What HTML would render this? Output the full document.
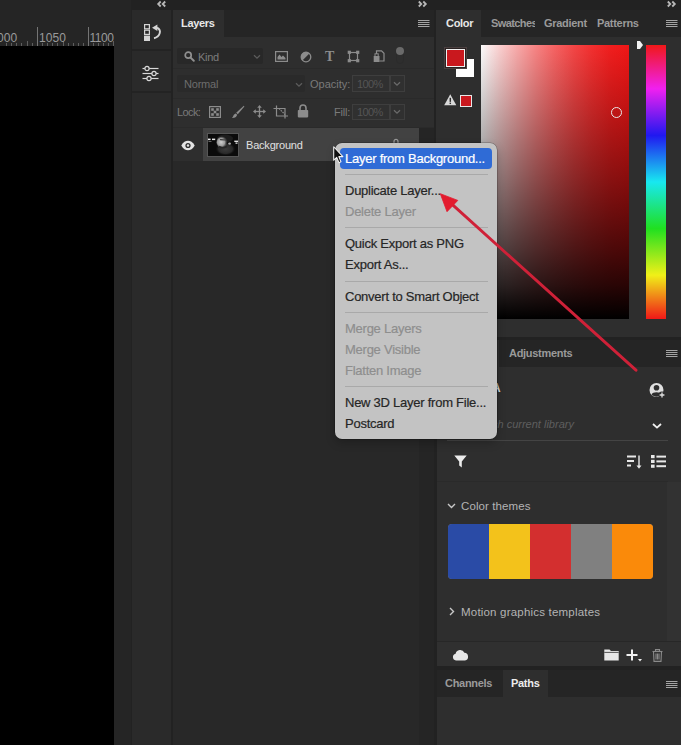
<!DOCTYPE html>
<html>
<head>
<meta charset="utf-8">
<title>Layers</title>
<style>
html,body{margin:0;padding:0;}
body{width:681px;height:745px;overflow:hidden;background:#222222;position:relative;font-family:"Liberation Sans",sans-serif;font-size:11px;color:#d6d6d6;}
.abs{position:absolute;}
.t{position:absolute;white-space:nowrap;line-height:14px;}
.dim{color:#6f6f6f;}
svg{position:absolute;overflow:visible;}
.mi{left:10px;line-height:16px;letter-spacing:-0.25px;-webkit-text-stroke:0.2px;}
.dis{color:#8e8e8e;}
.sep{left:10px;width:143px;height:1px;background:#a9a9a9;}
</style>
</head>
<body>
<!-- canvas area -->
<div class="abs" style="left:0;top:0;width:131px;height:745px;background:#252525;"></div>
<div class="abs" style="left:0;top:46px;width:114px;height:699px;background:#000;"></div>
<!-- ruler -->
<svg style="left:0.7px;top:24px" width="113.3" height="22">
 <g stroke="#747474" stroke-width="1">
  <line x1="36.5" y1="3" x2="36.5" y2="22"/><line x1="87.5" y1="3" x2="87.5" y2="22"/>
  <g id="tk"></g>
 </g>
 <g stroke="#5e5e5e" stroke-width="1">
  <line x1="5.5" y1="19" x2="5.5" y2="22"/><line x1="10.5" y1="19" x2="10.5" y2="22"/><line x1="15.5" y1="19" x2="15.5" y2="22"/><line x1="20.5" y1="19" x2="20.5" y2="22"/><line x1="26.5" y1="17" x2="26.5" y2="22"/><line x1="31.5" y1="19" x2="31.5" y2="22"/>
  <line x1="41.5" y1="19" x2="41.5" y2="22"/><line x1="46.5" y1="19" x2="46.5" y2="22"/><line x1="51.5" y1="19" x2="51.5" y2="22"/><line x1="56.5" y1="19" x2="56.5" y2="22"/><line x1="62.5" y1="17" x2="62.5" y2="22"/><line x1="67.5" y1="19" x2="67.5" y2="22"/><line x1="72.5" y1="19" x2="72.5" y2="22"/><line x1="77.5" y1="19" x2="77.5" y2="22"/><line x1="82.5" y1="19" x2="82.5" y2="22"/>
  <line x1="92.5" y1="19" x2="92.5" y2="22"/><line x1="97.5" y1="19" x2="97.5" y2="22"/><line x1="102.5" y1="19" x2="102.5" y2="22"/><line x1="107.5" y1="19" x2="107.5" y2="22"/><line x1="112.5" y1="17" x2="112.5" y2="22"/>
 </g>
</svg>
<div class="t" style="left:-3px;top:30.7px;font-size:12px;color:#9a9a9a;letter-spacing:0.1px;">000</div>
<div class="t" style="left:39px;top:30.7px;font-size:12px;color:#9a9a9a;letter-spacing:0.1px;">1050</div>
<div class="t" style="left:89.5px;top:30.7px;font-size:12px;color:#9a9a9a;letter-spacing:-0.5px;">1100</div>

<!-- tool column -->
<div class="abs" style="left:132px;top:10px;width:38.5px;height:735px;background:#2a2a2a;"></div>
<div class="abs" style="left:132px;top:49px;width:38.5px;height:2px;background:#232323;"></div>
<div class="abs" style="left:132px;top:91px;width:38.5px;height:2px;background:#232323;"></div>
<svg style="left:156.5px;top:1px" width="9" height="6" viewBox="0 0 9 6"><path d="M3.7 0.5 L1.2 3 L3.7 5.5 M8.2 0.5 L5.7 3 L8.2 5.5" fill="none" stroke="#b8b8b8" stroke-width="1.8"/></svg>

<!-- layers panel -->
<div class="abs" style="left:173px;top:10px;width:260.5px;height:735px;background:#2e2e2e;"></div>
<div class="abs" style="left:224px;top:10px;width:209.5px;height:27px;background:#252525;"></div>
<div class="t" style="left:181px;top:16px;font-weight:bold;color:#e8e8e8;letter-spacing:-0.3px;">Layers</div>


<!-- layers controls -->
<div class="abs" style="left:173px;top:68px;width:260.5px;height:1px;background:#2a2a2a;"></div>
<div class="abs" style="left:173px;top:98px;width:260.5px;height:1px;background:#2a2a2a;"></div>
<div class="abs" style="left:177px;top:48px;width:86px;height:16px;background:#282828;border-radius:2px;"></div>
<svg style="left:184px;top:51px" width="11" height="11" viewBox="0 0 11 11"><circle cx="4.2" cy="4.2" r="3" fill="none" stroke="#8f8f8f" stroke-width="1.7"/><line x1="6.6" y1="6.6" x2="9.8" y2="9.8" stroke="#8f8f8f" stroke-width="2" stroke-linecap="round"/></svg>
<div class="t" style="left:198px;top:50px;color:#7d7d7d;letter-spacing:-0.3px;">Kind</div>
<svg style="left:253px;top:54px" width="8" height="6" viewBox="0 0 8 6"><path d="M1 1.2 L4 4.2 L7 1.2" fill="none" stroke="#5c5c5c" stroke-width="1.3"/></svg>
<!-- filter icons -->
<svg style="left:275px;top:51px" width="13" height="11" viewBox="0 0 13 11"><rect x="0.6" y="0.6" width="11.8" height="9.8" fill="none" stroke="#8c8c8c" stroke-width="1.2"/><path d="M2.5 8.5 L2.5 6 L4.5 3.5 L6.5 6 L8 4.5 L10.5 7 L10.5 8.5 Z" fill="#8c8c8c"/></svg>
<svg style="left:300px;top:51px" width="12" height="12" viewBox="0 0 12 12"><circle cx="6" cy="6" r="4.8" fill="none" stroke="#8c8c8c" stroke-width="1.3"/><path d="M2.4 9.4 A4.8 4.8 0 0 1 9.4 2.4 Z" fill="#8c8c8c"/></svg>
<div class="t" style="left:325px;top:48px;font-family:'Liberation Serif',serif;font-weight:bold;font-size:14px;line-height:17px;color:#8c8c8c;">T</div>
<svg style="left:347px;top:50px" width="13" height="13" viewBox="0 0 13 13"><rect x="2.5" y="2.5" width="8" height="8" fill="none" stroke="#8c8c8c" stroke-width="1.2"/><rect x="0.7" y="0.7" width="3.2" height="3.2" fill="#8c8c8c"/><rect x="9.1" y="0.7" width="3.2" height="3.2" fill="#8c8c8c"/><rect x="0.7" y="9.1" width="3.2" height="3.2" fill="#8c8c8c"/><rect x="9.1" y="9.1" width="3.2" height="3.2" fill="#8c8c8c"/></svg>
<svg style="left:373px;top:50px" width="12" height="13" viewBox="0 0 12 13"><path d="M3.5 4 L3.5 0.8 L8.5 0.8 L11 3.3 L11 11 L6.5 11" fill="none" stroke="#8c8c8c" stroke-width="1.2"/><rect x="0.7" y="6" width="5.8" height="6" fill="#8c8c8c"/><rect x="2" y="3.8" width="3.2" height="3" fill="none" stroke="#8c8c8c" stroke-width="1"/></svg>
<div class="abs" style="left:396px;top:47px;width:8px;height:17px;border:1px solid #2b2b2b;border-radius:5px;box-sizing:border-box;"></div>
<div class="abs" style="left:396px;top:47px;width:8px;height:8px;border-radius:50%;background:#6a6a6a;"></div>

<!-- blend row -->
<div class="abs" style="left:177px;top:75px;width:128px;height:17px;background:#2a2a2a;border-radius:2px;"></div>
<div class="t" style="left:184px;top:77px;color:#6d6d6d;letter-spacing:-0.2px;">Normal</div>
<svg style="left:295px;top:82px" width="8" height="6" viewBox="0 0 8 6"><path d="M1 1.2 L4 4.2 L7 1.2" fill="none" stroke="#5c5c5c" stroke-width="1.3"/></svg>
<div class="t" style="left:310px;top:77px;color:#7a7a7a;">Opacity:</div>
<div class="abs" style="left:352px;top:75px;width:38px;height:17px;border:1px solid #3e3e3e;box-sizing:border-box;background:#303030;"></div>
<div class="t" style="left:357px;top:77px;color:#555;letter-spacing:-0.6px;">100%</div>
<div class="abs" style="left:390px;top:75px;width:15px;height:17px;border:1px solid #3e3e3e;box-sizing:border-box;background:#303030;"></div>
<svg style="left:393px;top:81px" width="8" height="6" viewBox="0 0 8 6"><path d="M1 1.2 L4 4.2 L7 1.2" fill="none" stroke="#6a6a6a" stroke-width="1.3"/></svg>

<!-- lock row -->
<div class="t" style="left:177px;top:105px;color:#7a7a7a;letter-spacing:-0.6px;">Lock:</div>
<svg style="left:209px;top:106px" width="12" height="12" viewBox="0 0 12 12"><rect x="0.6" y="0.6" width="10.8" height="10.8" fill="none" stroke="#8c8c8c" stroke-width="1.2"/><rect x="2.2" y="2.2" width="2.6" height="2.6" fill="#8c8c8c"/><rect x="7.2" y="2.2" width="2.6" height="2.6" fill="#8c8c8c"/><rect x="4.7" y="4.7" width="2.6" height="2.6" fill="#8c8c8c"/><rect x="2.2" y="7.2" width="2.6" height="2.6" fill="#8c8c8c"/><rect x="7.2" y="7.2" width="2.6" height="2.6" fill="#8c8c8c"/></svg>
<svg style="left:231px;top:105px" width="14" height="14" viewBox="0 0 14 14"><path d="M12.8 0.8 L13.4 1.6 L6.8 9.2 L5.2 7.8 Z" fill="#8c8c8c"/><path d="M4.6 8.4 L6.2 9.8 C5.8 12 3.5 13.2 0.8 13 C2.4 12 2.2 9.2 4.6 8.4 Z" fill="#8c8c8c"/></svg>
<svg style="left:253px;top:105px" width="13" height="13" viewBox="0 0 13 13"><g stroke="#8c8c8c" stroke-width="1.3" fill="none"><line x1="6.5" y1="1.5" x2="6.5" y2="11.5"/><line x1="1.5" y1="6.5" x2="11.5" y2="6.5"/></g><g fill="#8c8c8c"><path d="M6.5 0 L8.8 2.8 L4.2 2.8 Z"/><path d="M6.5 13 L8.8 10.2 L4.2 10.2 Z"/><path d="M0 6.5 L2.8 4.2 L2.8 8.8 Z"/><path d="M13 6.5 L10.2 4.2 L10.2 8.8 Z"/></g></svg>
<svg style="left:273px;top:105px" width="16" height="14" viewBox="0 0 16 14"><g stroke="#8c8c8c" stroke-width="1.2" fill="none"><path d="M3.5 0.5 L3.5 11 L15 11"/><path d="M0.5 3.5 L12 3.5 L12 13.5"/><line x1="6" y1="3.5" x2="12" y2="9.5" stroke-dasharray="1.5 1"/></g></svg>
<svg style="left:297px;top:104px" width="12" height="14" viewBox="0 0 12 14"><path d="M3 6 L3 4 A3 3 0 0 1 9 4 L9 6" fill="none" stroke="#8c8c8c" stroke-width="1.6"/><rect x="0.8" y="6" width="10.4" height="7.4" rx="0.8" fill="#8c8c8c"/></svg>
<div class="t" style="left:334px;top:105px;color:#7a7a7a;letter-spacing:-0.2px;">Fill:</div>
<div class="abs" style="left:352px;top:104px;width:38px;height:16px;border:1px solid #3e3e3e;box-sizing:border-box;background:#303030;"></div>
<div class="t" style="left:357px;top:105px;color:#555;letter-spacing:-0.6px;">100%</div>
<div class="abs" style="left:390px;top:104px;width:15px;height:16px;border:1px solid #3e3e3e;box-sizing:border-box;background:#303030;"></div>
<svg style="left:393px;top:109px" width="8" height="6" viewBox="0 0 8 6"><path d="M1 1.2 L4 4.2 L7 1.2" fill="none" stroke="#6a6a6a" stroke-width="1.3"/></svg>

<!-- layer row -->
<div class="abs" style="left:173px;top:127px;width:260.5px;height:1px;background:#2a2a2a;"></div>
<div class="abs" style="left:203px;top:128px;width:216px;height:33px;background:#424242;"></div>
<div class="abs" style="left:173px;top:161px;width:260.5px;height:584px;background:#282828;"></div><div class="abs" style="left:419px;top:128px;width:14.5px;height:617px;background:#252525;"></div>
<svg style="left:181px;top:140px" width="14" height="11" viewBox="0 0 14 11"><path d="M0.3 5.5 C2.2 2 4.6 0.8 7 0.8 C9.4 0.8 11.8 2 13.7 5.5 C11.8 9 9.4 10.2 7 10.2 C4.6 10.2 2.2 9 0.3 5.5 Z" fill="#e4e4e4"/><circle cx="7" cy="5.5" r="2.6" fill="#2e2e2e"/><circle cx="7" cy="5.5" r="1.2" fill="#e4e4e4"/></svg>
<div class="abs" style="left:207px;top:133px;width:32px;height:24px;background:#101010;border:1px solid #565656;box-sizing:border-box;"></div>
<svg style="left:208px;top:134px" width="30" height="22" viewBox="0 0 30 22"><defs><radialGradient id="fg1" cx="0.42" cy="0.5" r="0.6"><stop offset="0" stop-color="#cfcfcf"/><stop offset="0.55" stop-color="#9c9c9c"/><stop offset="1" stop-color="#3a3a3a" stop-opacity="0"/></radialGradient><radialGradient id="fg2" cx="0.5" cy="0.5" r="0.5"><stop offset="0" stop-color="#3c3c3c"/><stop offset="0.7" stop-color="#2a2a2a"/><stop offset="1" stop-color="#141414" stop-opacity="0"/></radialGradient><clipPath id="cp"><rect x="0" y="0" width="30" height="22"/></clipPath></defs><g clip-path="url(#cp)"><rect x="0" y="0" width="30" height="22" fill="#0b0b0b"/><ellipse cx="17.5" cy="15" rx="10" ry="6.5" fill="url(#fg2)"/><ellipse cx="17" cy="4.5" rx="8" ry="4" fill="#1d1d1d"/><ellipse cx="14" cy="8.2" rx="5.6" ry="5.8" fill="url(#fg1)"/><path d="M12.5 5.6 L17.5 6" stroke="#3a3a3a" stroke-width="1.1" stroke-linecap="round"/><ellipse cx="21.6" cy="9.6" rx="1.4" ry="1.2" fill="#a8a8a8"/><path d="M11 12.5 C13 14 16 14 19 12.5" stroke="#262626" stroke-width="1.6" fill="none"/><g opacity="0.95"><rect x="0" y="4.6" width="2.6" height="1.5" fill="#fff"/><rect x="4" y="4.6" width="3.2" height="1.5" fill="#f4f4f4"/><rect x="0.5" y="7" width="3" height="0.9" fill="#777"/><rect x="26.3" y="6.6" width="3.7" height="1.4" fill="#ececec"/><rect x="27.5" y="8.4" width="2" height="1.5" fill="#cfcfcf"/></g></g></svg>
<div class="t" style="left:246px;top:138px;color:#e0e0e0;letter-spacing:-0.2px;">Background</div>
<svg style="left:392px;top:138px" width="8" height="10" viewBox="0 0 8 10"><path d="M2 5 L2 3.4 A2 2 0 0 1 6 3.4 L6 5" fill="none" stroke="#9a9a9a" stroke-width="1.2"/></svg>

<!-- right panels -->
<div class="abs" style="left:436px;top:10px;width:245px;height:327px;background:#2e2e2e;"></div>
<div class="abs" style="left:481px;top:10px;width:200px;height:27px;background:#252525;"></div>
<div class="t" style="left:446px;top:16px;font-weight:bold;color:#e8e8e8;letter-spacing:-0.3px;">Color</div>


<!-- color panel content -->
<div class="t" style="left:491px;top:16px;font-weight:bold;color:#9a9a9a;letter-spacing:-0.6px;width:43.5px;overflow:hidden;">Swatches</div>
<div class="t" style="left:544px;top:16px;font-weight:bold;color:#9a9a9a;letter-spacing:-0.3px;">Gradient</div>
<div class="t" style="left:597px;top:16px;font-weight:bold;color:#9a9a9a;letter-spacing:-0.3px;">Patterns</div>
<svg style="left:665.5px;top:20px" width="10" height="8" viewBox="0 0 10 8"><g stroke="#a4a4a4" stroke-width="1"><line x1="0" y1="0.5" x2="11.5" y2="0.5"/><line x1="0" y1="2.5" x2="11.5" y2="2.5"/><line x1="0" y1="4.5" x2="11.5" y2="4.5"/><line x1="0" y1="6.5" x2="11.5" y2="6.5"/></g></svg>
<svg style="left:417.5px;top:20px" width="10" height="8" viewBox="0 0 10 8"><g stroke="#a4a4a4" stroke-width="1"><line x1="0" y1="0.5" x2="11.5" y2="0.5"/><line x1="0" y1="2.5" x2="11.5" y2="2.5"/><line x1="0" y1="4.5" x2="11.5" y2="4.5"/><line x1="0" y1="6.5" x2="11.5" y2="6.5"/></g></svg>
<!-- color field -->
<div class="abs" style="left:481px;top:45px;width:148px;height:274px;background:linear-gradient(to top,rgba(0,0,0,1.000) 0.0%,rgba(0,0,0,0.829) 12.5%,rgba(0,0,0,0.692) 25.0%,rgba(0,0,0,0.566) 37.5%,rgba(0,0,0,0.445) 50.0%,rgba(0,0,0,0.329) 62.5%,rgba(0,0,0,0.217) 75.0%,rgba(0,0,0,0.107) 87.5%,rgba(0,0,0,0.000) 100.0%),linear-gradient(to right,rgb(251,251,251) 0.0%,rgb(250,207,207) 12.5%,rgb(248,167,167) 25.0%,rgb(247,130,130) 37.5%,rgb(246,98,98) 50.0%,rgb(244,70,70) 62.5%,rgb(243,47,47) 75.0%,rgb(241,30,30) 87.5%,rgb(240,22,22) 100.0%);"></div>
<div class="abs" style="left:646px;top:45px;width:20px;height:274px;background:linear-gradient(to bottom,#f01818 0%,#f020f0 16%,#2018f0 33%,#18e8f0 50%,#20e020 67%,#f0f018 84%,#f01818 100%);"></div>
<svg style="left:637px;top:41px" width="6" height="8" viewBox="0 0 6 8"><path d="M0 0 L3 0 L6 4 L3 8 L0 8 Z" fill="#f2f2f2"/></svg>
<div class="abs" style="left:611px;top:107px;width:11px;height:11px;border:1.3px solid #e8e8e8;border-radius:50%;box-sizing:border-box;"></div>
<!-- swatches -->
<div class="abs" style="left:456px;top:59px;width:18px;height:18px;background:#fff;"></div>
<div class="abs" style="left:445.5px;top:48.5px;width:19px;height:18.5px;background:#c9181e;border:1px solid #f0f0f0;box-shadow:0 0 0 1px #2a2222,0 0 0 2px #4a4040;box-sizing:border-box;"></div>
<svg style="left:444px;top:94px" width="12.5" height="11.5" viewBox="0 0 13 12"><path d="M6.5 0.3 L12.8 11.7 L0.2 11.7 Z" fill="#d8d8d8"/><rect x="5.8" y="4" width="1.5" height="4.2" fill="#2e2e2e"/><rect x="5.8" y="9" width="1.5" height="1.5" fill="#2e2e2e"/></svg>
<div class="abs" style="left:460px;top:95px;width:12px;height:12px;background:#c9181e;border:1px solid #e8e8e8;box-sizing:border-box;"></div>

<!-- adjustments/libraries panel -->
<div class="abs" style="left:437px;top:340px;width:244px;height:27px;background:#252525;"></div>
<div class="abs" style="left:437px;top:367px;width:244px;height:299px;background:#2e2e2e;"></div>
<div class="abs" style="left:437px;top:340px;width:62px;height:27px;background:#2e2e2e;"></div>
<div class="t" style="left:509px;top:346px;font-weight:bold;color:#9a9a9a;letter-spacing:-0.3px;">Adjustments</div>
<svg style="left:665.5px;top:350px" width="10" height="8" viewBox="0 0 10 8"><g stroke="#a4a4a4" stroke-width="1"><line x1="0" y1="0.5" x2="11.5" y2="0.5"/><line x1="0" y1="2.5" x2="11.5" y2="2.5"/><line x1="0" y1="4.5" x2="11.5" y2="4.5"/><line x1="0" y1="6.5" x2="11.5" y2="6.5"/></g></svg>
<div class="t" style="left:492px;top:381px;font-weight:bold;color:#d0d0d0;font-size:12px;">A</div>
<svg style="left:648.5px;top:381.5px" width="17" height="17" viewBox="0 0 17 17"><circle cx="7.5" cy="8" r="7" fill="#e0e0e0"/><circle cx="7.5" cy="5.8" r="2.8" fill="#2e2e2e"/><path d="M2.6 12.6 C3.4 9.6 11.6 9.6 12.4 12.6 C10 15.4 5 15.4 2.6 12.6 Z" fill="#2e2e2e"/><circle cx="13" cy="13" r="3.6" fill="#2e2e2e"/><path d="M13 10.6 L13 15.4 M10.6 13 L15.4 13" stroke="#e0e0e0" stroke-width="1.3"/></svg>
<div class="t" style="left:492px;top:417px;font-style:italic;color:#5e5e5e;">ch current library</div>
<svg style="left:652px;top:423px" width="10" height="7" viewBox="0 0 10 7"><path d="M1 1 L5 4.6 L9 1" fill="none" stroke="#f0f0f0" stroke-width="1.8"/></svg>
<div class="abs" style="left:447px;top:440px;width:221px;height:1px;background:#444;"></div>
<svg style="left:454px;top:455px" width="13" height="13" viewBox="0 0 13 13"><path d="M0.3 0.5 L12.7 0.5 L7.8 6.4 L7.8 12.6 L5.2 10.6 L5.2 6.4 Z" fill="#ececec"/></svg>
<svg style="left:627px;top:454.7px" width="15" height="14" viewBox="0 0 15 14"><g fill="#e8e8e8"><rect x="0" y="0.5" width="9" height="2"/><rect x="0" y="5" width="7" height="2"/><rect x="0" y="9.5" width="4" height="2"/><rect x="11.3" y="0.5" width="1.4" height="11"/><path d="M9.5 10.5 L14.5 10.5 L12 13.8 Z"/></g></svg>
<svg style="left:651px;top:454.5px" width="15" height="13" viewBox="0 0 15 13"><g fill="#e8e8e8"><rect x="0" y="0" width="3.6" height="3.2"/><rect x="0" y="4.8" width="3.6" height="3.2"/><rect x="0" y="9.6" width="3.6" height="3.2"/><rect x="5.4" y="0.6" width="9.6" height="2"/><rect x="5.4" y="5.4" width="9.6" height="2"/><rect x="5.4" y="10.2" width="9.6" height="2"/></g></svg>
<div class="abs" style="left:437px;top:481px;width:231px;height:1px;background:#2a2a2a;"></div>
<svg style="left:447px;top:503px" width="9" height="6" viewBox="0 0 9 6"><path d="M1 1 L4.5 4.5 L8 1" fill="none" stroke="#c8c8c8" stroke-width="1.4"/></svg>
<div class="t" style="left:461px;top:499px;color:#b4b4b4;font-size:11.5px;letter-spacing:0.1px;">Color themes</div>
<div class="abs" style="left:448px;top:523.6px;width:205.4px;height:55px;border-radius:4px;overflow:hidden;background:#808080;">
 <div class="abs" style="left:0;top:0;width:41px;height:55px;background:#2a4ba6;"></div>
 <div class="abs" style="left:41px;top:0;width:41px;height:55px;background:#f3c21b;"></div>
 <div class="abs" style="left:82px;top:0;width:41px;height:55px;background:#d32f2f;"></div>
 <div class="abs" style="left:123px;top:0;width:41px;height:55px;background:#808080;"></div>
 <div class="abs" style="left:164px;top:0;width:41px;height:55px;background:#fa8a0a;"></div>
</div>
<svg style="left:449px;top:607px" width="6" height="9" viewBox="0 0 6 9"><path d="M1 1 L4.5 4.5 L1 8" fill="none" stroke="#c8c8c8" stroke-width="1.4"/></svg>
<div class="t" style="left:461px;top:605px;color:#b4b4b4;font-size:11.5px;letter-spacing:0.2px;">Motion graphics templates</div>
<div class="abs" style="left:437px;top:641px;width:244px;height:1px;background:#272727;"></div><div class="abs" style="left:437px;top:642px;width:244px;height:24px;background:#303030;"></div>
<svg style="left:452px;top:649px" width="17" height="12" viewBox="0 0 17 12"><path d="M4 11.5 A3.4 3.4 0 0 1 3.6 4.8 A4.6 4.6 0 0 1 12.4 3.8 A3.9 3.9 0 0 1 13 11.5 Z" fill="#e6e6e6"/></svg>
<svg style="left:604px;top:649px" width="15" height="12" viewBox="0 0 15 12"><path d="M0.3 0.5 L5.5 0.5 L7 2 L14.7 2 L14.7 11.5 L0.3 11.5 Z" fill="#e6e6e6"/><path d="M0.3 3.4 L14.7 3.4" stroke="#2d2d2d" stroke-width="0.8"/></svg>
<svg style="left:626px;top:649px" width="16" height="13" viewBox="0 0 16 13"><path d="M6 0.5 L6 11.5 M0.5 6 L11.5 6" stroke="#f0f0f0" stroke-width="2"/><path d="M12 10 L16 10 L14 12.6 Z" fill="#f0f0f0"/></svg>
<svg style="left:652px;top:649px" width="11" height="13" viewBox="0 0 11 13"><g stroke="#8a8a8a" fill="none" stroke-width="1.1"><path d="M0.5 2.5 L10.5 2.5"/><path d="M3.5 2.5 L3.5 0.6 L7.5 0.6 L7.5 2.5"/><path d="M1.5 2.5 L2 12.4 L9 12.4 L9.5 2.5"/><path d="M4 4.5 L4 10.5 M5.5 4.5 L5.5 10.5 M7 4.5 L7 10.5"/></g></svg>

<div class="abs" style="left:667px;top:482px;width:14px;height:159px;background:#323232;"></div>
<!-- channels / paths -->
<div class="abs" style="left:437px;top:670px;width:244px;height:27px;background:#252525;"></div>
<div class="abs" style="left:503px;top:670px;width:45px;height:27px;background:#2e2e2e;"></div>
<div class="abs" style="left:437px;top:697px;width:244px;height:48px;background:#2e2e2e;"></div>
<div class="t" style="left:445px;top:676px;font-weight:bold;color:#9a9a9a;letter-spacing:-0.3px;">Channels</div>
<div class="t" style="left:511px;top:676px;font-weight:bold;color:#ececec;letter-spacing:-0.3px;">Paths</div>
<svg style="left:665.5px;top:680.5px" width="10" height="8" viewBox="0 0 10 8"><g stroke="#a4a4a4" stroke-width="1"><line x1="0" y1="0.5" x2="11.5" y2="0.5"/><line x1="0" y1="2.5" x2="11.5" y2="2.5"/><line x1="0" y1="4.5" x2="11.5" y2="4.5"/><line x1="0" y1="6.5" x2="11.5" y2="6.5"/></g></svg>

<!-- tool column icons -->
<svg style="left:144px;top:24px" width="18" height="17" viewBox="0 0 18 17"><rect x="0.6" y="0.6" width="4.8" height="4.2" fill="none" stroke="#d4d4d4" stroke-width="1.2"/><rect x="0.6" y="6.2" width="4.8" height="4.2" fill="none" stroke="#d4d4d4" stroke-width="1.2"/><rect x="0" y="11.6" width="6" height="5.4" fill="#d4d4d4"/><path d="M10 14.2 C15.5 13 18.5 6.5 13 3.6" fill="none" stroke="#d4d4d4" stroke-width="1.9"/><path d="M8 3.8 L13.4 0.4 L13.4 7 Z" fill="#d4d4d4"/></svg>
<svg style="left:142px;top:65px" width="17" height="17" viewBox="0 0 17 17"><g stroke="#d8d8d8" stroke-width="1.2" fill="#2a2a2a"><line x1="0.5" y1="3.5" x2="16.5" y2="3.5"/><line x1="0.5" y1="8.5" x2="16.5" y2="8.5"/><line x1="0.5" y1="13.5" x2="16.5" y2="13.5"/><circle cx="5" cy="3.5" r="2.1"/><circle cx="12" cy="8.5" r="2.1"/><circle cx="7" cy="13.5" r="2.1"/></g></svg>
<!-- collapse marks -->
<svg style="left:667px;top:1px" width="9" height="6" viewBox="0 0 9 6"><path d="M0.8 0.5 L3.3 3 L0.8 5.5 M5.3 0.5 L7.8 3 L5.3 5.5" fill="none" stroke="#b8b8b8" stroke-width="1.8"/></svg>
<svg style="left:418px;top:1px" width="9" height="6" viewBox="0 0 9 6"><path d="M0.8 0.5 L3.3 3 L0.8 5.5 M5.3 0.5 L7.8 3 L5.3 5.5" fill="none" stroke="#b8b8b8" stroke-width="1.8"/></svg>

<!-- context menu -->
<div class="abs" id="menu" style="left:335px;top:143px;width:161.5px;height:296px;background:#c3c3c3;border-radius:7px;box-shadow:0 0 0 0.5px rgba(0,0,0,0.35),0 4px 10px rgba(0,0,0,0.22);font-size:13px;color:#262626;">
 <div class="abs" style="left:5px;top:5px;width:152px;height:21px;background:#2f6bd6;border-radius:4px;"></div>
 <div class="t mi" style="top:8px;color:#fff;">Layer from Background...</div>
 <div class="abs sep" style="top:31px;"></div>
 <div class="t mi" style="top:40px;">Duplicate Layer...</div>
 <div class="t mi dis" style="top:61px;">Delete Layer</div>
 <div class="abs sep" style="top:84px;"></div>
 <div class="t mi" style="top:93px;">Quick Export as PNG</div>
 <div class="t mi" style="top:114px;">Export As...</div>
 <div class="abs sep" style="top:138px;"></div>
 <div class="t mi" style="top:146px;">Convert to Smart Object</div>
 <div class="abs sep" style="top:169px;"></div>
 <div class="t mi dis" style="top:178px;">Merge Layers</div>
 <div class="t mi dis" style="top:199px;">Merge Visible</div>
 <div class="t mi dis" style="top:220px;">Flatten Image</div>
 <div class="abs sep" style="top:243px;"></div>
 <div class="t mi" style="top:252px;">New 3D Layer from File...</div>
 <div class="t mi" style="top:273px;">Postcard</div>
</div>
<!-- red arrow -->
<svg style="left:0;top:0" width="681" height="745" viewBox="0 0 681 745"><line x1="636" y1="370.2" x2="451" y2="203.4" stroke="#cf2138" stroke-width="2.9" stroke-linecap="round"/><path d="M440.3 193.7 L457.8 200.4 L447 211.7 Z" fill="#e31b2e" stroke="#e31b2e" stroke-width="0.8" stroke-linejoin="round"/></svg>
<!-- cursor -->
<svg style="left:333.2px;top:145.7px" width="10.5" height="18" viewBox="0 0 11 19"><path d="M0.7 0.8 L0.7 15 L3.9 12 L6.2 17.6 L8.4 16.7 L6.1 11.2 L10.4 11.2 Z" fill="#111" stroke="#f4f4f4" stroke-width="1.1" stroke-linejoin="round"/></svg>
</body>
</html>
